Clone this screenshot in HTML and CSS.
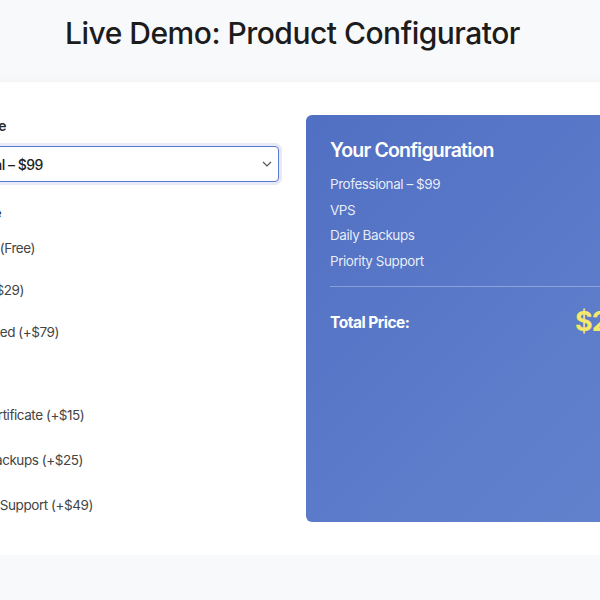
FILE: index.html
```html
<!DOCTYPE html>
<html lang="en">
<head>
	<meta charset="UTF-8">
	<title>Product Configurator</title>
	<link rel="stylesheet" href="styles.css">
</head>
<body>
	<div class="page">
		<h1 class="title">Live Demo: Product Configurator</h1>
		<div class="card">
			<div class="options">
				<label class="field-label">Base Package</label>
				<div class="select-wrap">
					<select class="select">
						<option>Professional – $99</option>
					</select>
					<svg class="chevron" width="10" height="6" viewBox="0 0 10 6"><path d="M1 1l4 4 4-4" fill="none" stroke="#555" stroke-width="1.2"/></svg>
				</div>

				<label class="field-label group-label">Hosting Type</label>
				<div class="radio-list">
					<label class="choice"><input type="radio" name="host"> Shared (Free)</label>
					<label class="choice"><input type="radio" name="host" checked> VPS (+$29)</label>
					<label class="choice"><input type="radio" name="host"> Dedicated (+$79)</label>
				</div>

				<label class="field-label group-label addons">Add-ons</label>
				<div class="check-list">
					<label class="choice"><input type="checkbox"> SSL Certificate (+$15)</label>
					<label class="choice"><input type="checkbox" checked> Daily Backups (+$25)</label>
					<label class="choice"><input type="checkbox" checked> Priority Support (+$49)</label>
				</div>
			</div>

			<div class="summary">
				<h2 class="summary-title">Your Configuration</h2>
				<ul class="summary-list">
					<li>Professional – $99</li>
					<li>VPS</li>
					<li>Daily Backups</li>
					<li>Priority Support</li>
				</ul>
				<div class="total">
					<span class="total-label">Total Price:</span>
					<span class="total-price">$202</span>
				</div>
			</div>
		</div>
	</div>
</body>
</html>
```

FILE: styles.css
```css
body,h1,h2,ul{
	margin: 0;padding: 0;
}
body{
	background: #f8f9fa;
	font-family: Inter, "Liberation Sans", sans-serif;
	color: #333;
	overflow: hidden;
}
.page{
	width: 809px;margin-left: -112px;
}
.title{
	font-size: 30px;font-weight: 500;line-height: 36px;text-align: center;color: #1c1c1c;
	letter-spacing: -0.5px;
	margin: 15px 0 31px;
}
.card{
	background: #fff;
	box-shadow: 0 2px 10px rgba(0,0,0,0.06);
	padding: 33px 32px 33px;
	display: grid;grid-template-columns: 1fr 1fr;gap: 27px;
}
.options{
	display: flex;flex-direction: column;
	margin-left: -5px;
	padding-top: 1px;padding-bottom: 6px;
}
.field-label{
	font-size: 14px;font-weight: 600;line-height: 20px;color: #2a2a2a;letter-spacing: -0.3px;
	margin-bottom: 10px;
}
.select-wrap{
	position: relative;
}
.select{
	-webkit-appearance: none;appearance: none;
	width: 100%;height: 36px;
	border: 1.5px solid #5b79d2;border-radius: 4px;
	box-shadow: 0 0 0 3px rgba(91,121,210,0.15);
	background: #fff;
	font-family: inherit;font-size: 14px;font-weight: 500;color: #222;letter-spacing: -0.5px;
	padding: 0 12px;outline: none;
}
.chevron{
	position: absolute;right: 7px;top: 15px;
}
.group-label{
	margin-top: 21px;margin-bottom: 14px;
}
.addons{
	margin-top: 24px;margin-bottom: 17px;
}
.choice{
	display: flex;align-items: center;
	font-size: 13.5px;line-height: 22px;color: #444;letter-spacing: -0.45px;
}
.choice input{
	width: 18px;height: 18px;margin: 0 14px 0 7px;
}
.radio-list{
	display: flex;flex-direction: column;gap: 20px;
}
.check-list{
	display: flex;flex-direction: column;gap: 23px;
}
.summary{
	background: linear-gradient(135deg, #5170c3 0%, #6483ce 100%);
	border-radius: 6px;
	padding: 23px 24px;
	color: #fff;
}
.summary-title{
	font-size: 19.5px;font-weight: 600;line-height: 24px;letter-spacing: -0.8px;
	margin-bottom: 10px;
}
.summary-list{
	list-style: none;
	font-size: 13.5px;line-height: 25.6px;color: rgba(255,255,255,0.88);letter-spacing: -0.45px;
	padding-bottom: 12px;
	border-bottom: 1px solid rgba(255,255,255,0.3);
}
.total{
	display: flex;justify-content: space-between;align-items: center;
	padding-top: 16px;
}
.total-label{
	font-size: 15.5px;font-weight: 700;letter-spacing: -0.5px;
}
.total-price{
	font-size: 27px;font-weight: 700;line-height: 38px;color: #f5e86b;letter-spacing: -1px;
}
```
